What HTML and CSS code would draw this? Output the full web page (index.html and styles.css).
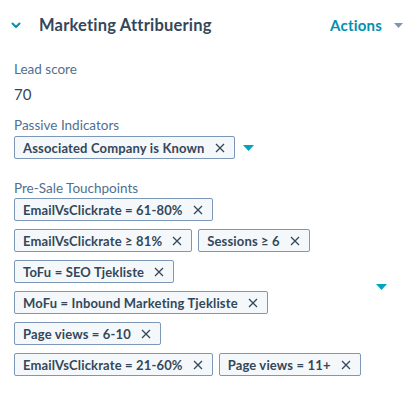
FILE: index.html
```html
<!DOCTYPE html>
<html lang="da">
<head>
<meta charset="utf-8">
<title>Marketing Attribuering</title>
<link rel="stylesheet" href="styles.css">
</head>
<body>
<section class="card">
  <header class="card-header">
    <button class="toggle" aria-label="Collapse">
      <svg width="10" height="7" viewBox="0 0 10 7"><path d="M1.5 1.5 L5 5 L8.5 1.5" fill="none" stroke="#0091ae" stroke-width="2" stroke-linecap="round" stroke-linejoin="round"/></svg>
    </button>
    <h2 class="title">Marketing Attribuering</h2>
    <div class="actions">
      <span class="actions-label">Actions</span>
      <svg class="caret" width="9" height="5" viewBox="0 0 9 5"><path d="M0 0 H9 L4.5 5 Z" fill="#7c98b6"/></svg>
    </div>
  </header>

  <div class="field">
    <div class="label">Lead score</div>
    <div class="value">70</div>
  </div>

  <div class="field">
    <div class="label">Passive Indicators</div>
    <div class="tag-field">
      <div class="tags">
        <span class="tag">Associated Company is Known<svg class="x" width="10" height="10" viewBox="0 0 10 10"><path d="M1 1 L9 9 M9 1 L1 9" stroke="#33475b" stroke-width="1.3"/></svg></span>
      </div>
      <svg class="drop" width="11" height="6" viewBox="0 0 11 6"><path d="M0 0 H11 L5.5 6 Z" fill="#00a4bd"/></svg>
    </div>
  </div>

  <div class="field">
    <div class="label">Pre-Sale Touchpoints</div>
    <div class="tag-field wide">
      <div class="tags">
        <span class="tag">EmailVsClickrate = 61-80%<svg class="x" width="10" height="10" viewBox="0 0 10 10"><path d="M1 1 L9 9 M9 1 L1 9" stroke="#33475b" stroke-width="1.3"/></svg></span>
        <span class="tag">EmailVsClickrate ≥ 81%<svg class="x" width="10" height="10" viewBox="0 0 10 10"><path d="M1 1 L9 9 M9 1 L1 9" stroke="#33475b" stroke-width="1.3"/></svg></span>
        <span class="tag">Sessions ≥ 6<svg class="x" width="10" height="10" viewBox="0 0 10 10"><path d="M1 1 L9 9 M9 1 L1 9" stroke="#33475b" stroke-width="1.3"/></svg></span>
        <span class="tag">ToFu = SEO Tjekliste<svg class="x" width="10" height="10" viewBox="0 0 10 10"><path d="M1 1 L9 9 M9 1 L1 9" stroke="#33475b" stroke-width="1.3"/></svg></span>
        <span class="tag">MoFu = Inbound Marketing Tjekliste<svg class="x" width="10" height="10" viewBox="0 0 10 10"><path d="M1 1 L9 9 M9 1 L1 9" stroke="#33475b" stroke-width="1.3"/></svg></span>
        <span class="tag">Page views = 6-10<svg class="x" width="10" height="10" viewBox="0 0 10 10"><path d="M1 1 L9 9 M9 1 L1 9" stroke="#33475b" stroke-width="1.3"/></svg></span>
        <span class="tag">EmailVsClickrate = 21-60%<svg class="x" width="10" height="10" viewBox="0 0 10 10"><path d="M1 1 L9 9 M9 1 L1 9" stroke="#33475b" stroke-width="1.3"/></svg></span>
        <span class="tag">Page views = 11+<svg class="x" width="10" height="10" viewBox="0 0 10 10"><path d="M1 1 L9 9 M9 1 L1 9" stroke="#33475b" stroke-width="1.3"/></svg></span>
      </div>
      <svg class="drop" width="11" height="6" viewBox="0 0 11 6"><path d="M0 0 H11 L5.5 6 Z" fill="#00a4bd"/></svg>
    </div>
  </div>
</section>
</body>
</html>
```
FILE: styles.css
```css
* { box-sizing: border-box; }
html, body { margin: 0; padding: 0; background: #ffffff; }
body {
  font-family: Lato, "Noto Sans", "DejaVu Sans", sans-serif;
  color: #33475b;
  width: 420px;
  height: 393px;
  overflow: hidden;
}
.card { padding: 0 0 0 14px; }
.card-header {
  display: flex;
  align-items: center;
  height: 50px;
  padding-right: 17px;
}
.toggle {
  border: 0;
  background: none;
  padding: 0;
  margin-left: -3px;
  width: 28px;
  display: flex;
  align-items: center;
  height: 20px;
}
.title {
  margin: 0;
  font-size: 16.5px;
  font-weight: 700;
  color: #33475b;
  flex: 1;
  letter-spacing: 0.2px;
}
.actions {
  display: flex;
  align-items: center;
  gap: 12px;
}
.actions-label {
  color: #0091ae;
  font-weight: 700;
  font-size: 15px;
  letter-spacing: 0.2px;
}
.caret { margin-top: 1px; }
.label {
  font-size: 13.5px;
  color: #516f90;
  line-height: 18px;
}
.field:nth-of-type(1) { margin-top: 10px; }
.field + .field { margin-top: 12px; }
.field:last-child { margin-top: 20px; }
.value {
  font-size: 15px;
  color: #33475b;
  margin-top: 6px;
  line-height: 20px;
}
.tag-field {
  display: flex;
  align-items: center;
  margin-top: 2px;
}
.tag-field.wide { margin-top: 1px; }
.tag-field.wide .tags { width: 347px; flex: none; }
.tags {
  display: flex;
  flex-wrap: wrap;
  gap: 8px 6px;
}
.tag {
  display: inline-flex;
  align-items: center;
  height: 23px;
  padding: 0 9px 0 8px;
  border: 1px solid #7c98b6;
  background: #f5f8fa;
  border-radius: 2px;
  font-size: 13px;
  font-weight: 700;
  color: #33475b;
  white-space: nowrap;
  letter-spacing: 0.15px;
}
.x { margin-left: 10px; flex: none; }
.drop { margin-left: 8px; }
.tag-field.wide .drop { margin-left: 15px; }
```
